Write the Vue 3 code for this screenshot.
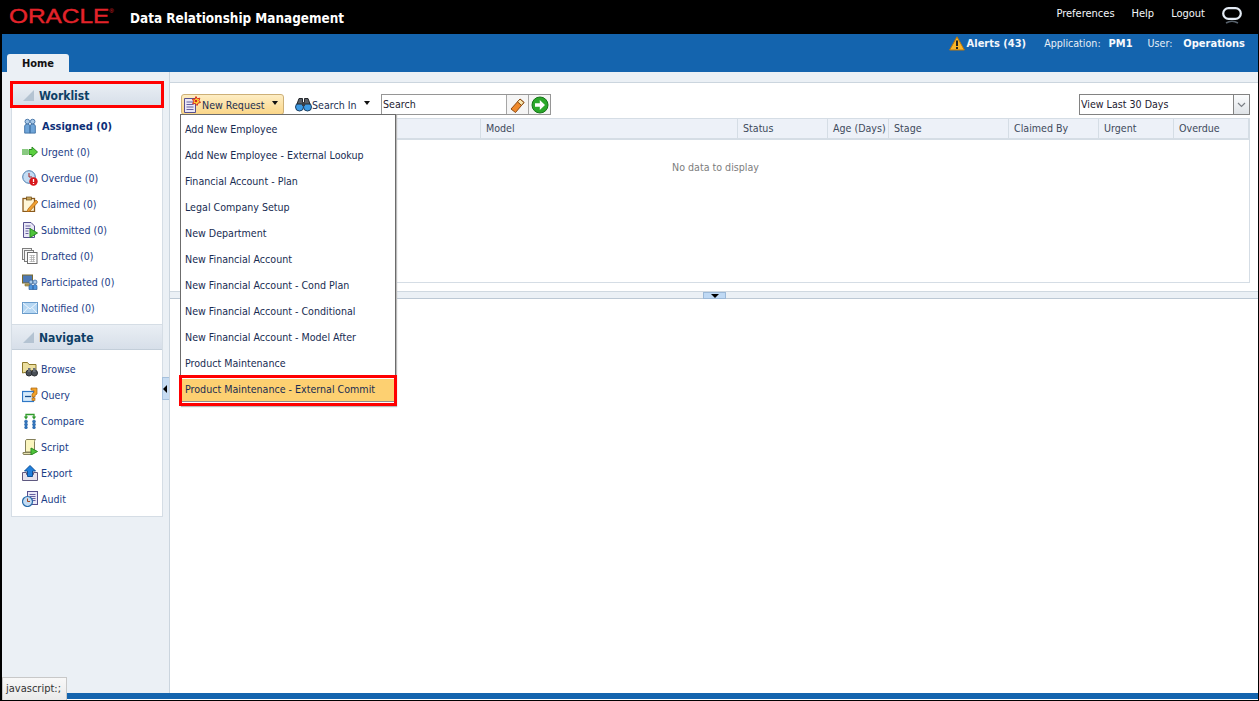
<script setup>
const menuItems = [
  'Add New Employee',
  'Add New Employee - External Lookup',
  'Financial Account - Plan',
  'Legal Company Setup',
  'New Department',
  'New Financial Account',
  'New Financial Account - Cond Plan',
  'New Financial Account - Conditional',
  'New Financial Account - Model After',
  'Product Maintenance'
]
const columns = [
  { label: '', w: 299 },
  { label: 'Model', w: 257 },
  { label: 'Status', w: 90 },
  { label: 'Age (Days)', w: 61 },
  { label: 'Stage', w: 120 },
  { label: 'Claimed By', w: 90 },
  { label: 'Urgent', w: 75 },
  { label: 'Overdue', w: 75 }
]
</script>

<template>
  <div class="app">
    <header class="top">
      <span class="logo">ORACLE<sup>®</sup></span>
      <span class="title">Data Relationship Management</span>
      <nav class="toplinks">
        <span>Preferences</span>
        <span>Help</span>
        <span>Logout</span>
        <svg class="ring" width="20" height="20" viewBox="0 0 20 20">
          <rect x="1.200" y="1.200" width="17.600" height="10.600" rx="5.300" fill="none" stroke="#e4ecf5" stroke-width="2.200" />
          <path d="M4 16 Q10 12.500 16 16" fill="none" stroke="#59636d" stroke-width="1.500" />
        </svg>
      </nav>
    </header>

    <div class="band">
      <div class="status">
        <svg width="16" height="15" viewBox="0 0 16 15">
          <path d="M8 .8 15.400 14H.6Z" fill="#f8b62a" stroke="#b9760f" />
          <rect x="7" y="4.500" width="2" height="5.500" fill="#222" />
          <rect x="7" y="11" width="2" height="2" fill="#222" />
        </svg>
        <b class="alerts">Alerts (43)</b>
        <span class="lab app-lab">Application:</span><b class="val">PM1</b>
        <span class="lab user-lab">User:</span><b class="val">Operations</b>
      </div>
      <div class="tab">Home</div>
    </div>

    <div class="body">
      <aside class="side">
        <div class="panel">
          <h3 class="acc acc-marked"><i class="tri"></i>Worklist</h3>
          <ul class="list">
            <li class="current">
              <svg viewBox="0 0 16 18"><circle cx="5" cy="4" r="2.600" fill="#a9c9e8" stroke="#3d6fa3" /><circle cx="11" cy="4" r="2.600" fill="#a9c9e8" stroke="#3d6fa3" /><path d="M2 17V9q0-2 3-2t3 2v8ZM8 17V9q0-2 3-2t3 2v8Z" fill="#6fa5d8" stroke="#3d6fa3" /></svg>
              <a>Assigned (0)</a>
            </li>
            <li>
              <svg viewBox="0 0 16 16"><path d="M1 5v6M3 5v6M5 5v6" stroke="#3aa52c" stroke-width="1.200" /><path d="M7 5.500h3V3l5.500 5-5.500 5v-2.500H7Z" fill="#5bd03f" stroke="#2c8b22" /></svg>
              <a>Urgent (0)</a>
            </li>
            <li>
              <svg viewBox="0 0 16 16"><circle cx="7" cy="7" r="6.300" fill="#c3dcf3" stroke="#4a7cae" /><path d="M7 3v4h3" fill="none" stroke="#a52020" /><circle cx="11.500" cy="11.500" r="4.200" fill="#d8181c" /><path d="M11.500 9v3M11.500 13v1" stroke="#fff" stroke-width="1.300" /></svg>
              <a>Overdue (0)</a>
            </li>
            <li>
              <svg viewBox="0 0 16 16"><rect x="1" y="2.500" width="11.500" height="13" fill="#fff6d8" stroke="#8a5a1c" stroke-width="1.300" /><rect x="4.500" y="1" width="5" height="3" fill="#c9a65b" stroke="#6b4a18" stroke-width=".7" /><path d="M6 13 14 4l2 2-8 9-3 1Z" fill="#f0a030" stroke="#a8620f" stroke-width=".7" /></svg>
              <a>Claimed (0)</a>
            </li>
            <li>
              <svg viewBox="0 0 16 16"><path d="M1.500.5H9L12.500 4v11.500h-11Z" fill="#e9e7f6" stroke="#56508f" /><path d="M3.500 4h5M3.500 6.500h5M3.500 9h3M3.500 11.500h3" stroke="#6660a0" /><path d="M8 6.500 15.500 11 8 15.500Z" fill="#4ec43a" stroke="#2c8b22" /></svg>
              <a>Submitted (0)</a>
            </li>
            <li>
              <svg viewBox="0 0 16 16"><rect x=".5" y=".5" width="9" height="11" fill="#f2f2f2" stroke="#7d7d7d" /><rect x="2.500" y="2.500" width="9" height="11" fill="#f6f6f6" stroke="#7d7d7d" /><rect x="5.500" y="4.500" width="9.500" height="11" fill="#fff" stroke="#6e6e6e" /><path d="M7.500 7.500h5.500M7.500 9.500h5.500M7.500 11.500h5.500M7.500 13.500h5.500M9.500 7v7M11.500 7v7" stroke="#aaa" stroke-width=".7" /></svg>
              <a>Drafted (0)</a>
            </li>
            <li>
              <svg viewBox="0 0 16 16"><rect x=".5" y="1" width="10" height="8" fill="#4d79b5" stroke="#7b6a2d" /><path d="M3 10h5v2H3Z" fill="#b9a55e" stroke="#7b6a2d" stroke-width=".6" /><circle cx="9" cy="8" r="2" fill="#a9c9e8" stroke="#2f5f9a" stroke-width=".7" /><circle cx="13" cy="8" r="2" fill="#a9c9e8" stroke="#2f5f9a" stroke-width=".7" /><path d="M7 15.500v-3q0-2 2-2t2 2v3ZM11 15.500v-3q0-2 2-2t2 2v3Z" fill="#4f95de" stroke="#2f5f9a" stroke-width=".7" /></svg>
              <a>Participated (0)</a>
            </li>
            <li>
              <svg viewBox="0 0 16 16"><rect x=".5" y="2.500" width="15" height="11" fill="#b6d7f3" stroke="#6a9ccb" /><path d="M1 3 8 9l7-6M1 13l5-5.500M15 13l-5-5.500" fill="none" stroke="#eef6fd" /></svg>
              <a>Notified (0)</a>
            </li>
          </ul>

          <h3 class="acc"><i class="tri"></i>Navigate</h3>
          <ul class="list">
            <li>
              <svg viewBox="0 0 16 16"><path d="M.5 12V1.500h5l1.500 2h7V9Z" fill="#ecdf9f" stroke="#8e7a2b" /><circle cx="7" cy="12" r="3" fill="#4a5058" stroke="#2b2e33" /><circle cx="12.500" cy="12" r="3" fill="#4a5058" stroke="#2b2e33" /><rect x="6" y="7" width="2.500" height="4" fill="#6a7078" /><rect x="11" y="7" width="2.500" height="4" fill="#6a7078" /></svg>
              <a>Browse</a>
            </li>
            <li>
              <svg viewBox="0 0 16 16"><rect x=".5" y="4.500" width="11" height="10" fill="#d7ebfb" stroke="#2f78c6" stroke-width="1.200" /><path d="M3 9.500h6" stroke="#174f8f" stroke-width="1.300" /><path d="M9 3V1h6v6l-2 1.500V10h-3V7l2-1.500V3.500Z" fill="#f3a32a" stroke="#a8620f" stroke-width=".7" /><rect x="10" y="11" width="3" height="2.500" fill="#f3a32a" stroke="#a8620f" stroke-width=".6" /></svg>
              <a>Query</a>
            </li>
            <li>
              <svg viewBox="0 0 16 16"><path d="M4 4V1.500h8V4" fill="none" stroke="#2f9a2a" stroke-width="1.300" /><path d="M1.800 3.500h4.400L4 6.500ZM9.800 3.500h4.400L12 6.500Z" fill="#2f9a2a" /><g fill="#2f74c0" stroke="#1f5c9c" stroke-width=".5"><circle cx="4" cy="8.500" r="1.500" /><circle cx="12" cy="8.500" r="1.500" /><circle cx="4" cy="11.500" r="1.500" /><circle cx="12" cy="11.500" r="1.500" /><circle cx="4" cy="14.500" r="1.400" /><circle cx="12" cy="14.500" r="1.400" /></g></svg>
              <a>Compare</a>
            </li>
            <li>
              <svg viewBox="0 0 16 16"><path d="M3.500 1.500Q4 .5 5 .5h8.500q-1 .8-1 2V13h-9Z" fill="#fbf6bf" stroke="#84805a" /><path d="M1 13.500h9v2H2q-1.500 0-1-2Z" fill="#e6e2ae" stroke="#84805a" /><path d="M9 9l6.500 3.500L9 16Z" fill="#4ec43a" stroke="#2c8b22" /></svg>
              <a>Script</a>
            </li>
            <li>
              <svg viewBox="0 0 16 16"><path d="M.5 7.500h4v2h7v-2h4v8H.5Z" fill="#e4e2ec" stroke="#5e587f" /><path d="M8 .5 13.500 6H10.500v5.500h-5V6H2.500Z" fill="#1f7fdc" stroke="#0d4f95" /></svg>
              <a>Export</a>
            </li>
            <li>
              <svg viewBox="0 0 16 16"><rect x="5.500" y=".5" width="10" height="13" fill="#e9e7f6" stroke="#56508f" /><path d="M7.500 3.500h6M7.500 5.500h6M10 7.500h3.500M10 9.500h3.500" stroke="#6660a0" /><circle cx="5.500" cy="10.500" r="5" fill="#c3dcf3" stroke="#276aa8" stroke-width="1.200" /><path d="M5.500 7.500v3h2.500" fill="none" stroke="#a3471f" /></svg>
              <a>Audit</a>
            </li>
          </ul>
        </div>
        <button class="collapse" aria-label="Collapse"></button>
      </aside>

      <main class="main">
        <section class="upper">
          <div class="toolbar">
            <div class="reqwrap">
              <button class="req">
                <svg width="17" height="17" viewBox="0 0 17 17"><path d="M.5 2.500h11v14H.5Z" fill="#e9e7f6" stroke="#56508f" /><path d="M2.500 6h7M2.500 8.500h7M2.500 11h7M2.500 13.500h7" stroke="#6660a0" /><path d="M12 .5l1.200 2.300 2.600-.6-.8 2.500 1.600 1.700-2.500.7L13 9.500l-1.700-2-2.600.3 1-2.500-1.300-2 2.600-.2Z" fill="#ffd83a" stroke="#d8281c" /><circle cx="12" cy="5" r="1.300" fill="#d8281c" /></svg>
                <span>New Request</span><i class="caret"></i>
              </button>
              <div class="menu">
                <div v-for="m in menuItems" :key="m" class="mi">{{ m }}</div>
                <div class="mi-hit"><span>Product Maintenance - External Commit</span></div>
              </div>
            </div>
            <button class="srch">
              <svg width="17" height="15" viewBox="0 0 17 15"><circle cx="4.500" cy="10" r="4" fill="#3e9be4" stroke="#1d3e60" /><circle cx="12.500" cy="10" r="4" fill="#3e9be4" stroke="#1d3e60" /><path d="M2 7 4 1.500h3.500V7ZM15 7 13 1.500H9.500V7Z" fill="#5a6068" stroke="#25282c" /><rect x="7" y="5" width="3" height="4" fill="#3a3f46" /></svg>
              <span>Search In</span><i class="caret"></i>
            </button>
            <div class="searchbox">
              <span class="sinput">Search</span>
              <span class="sbtn">
                <svg width="18" height="18" viewBox="0 0 18 18"><path d="M2 13 11 3l4 3.500-8.500 10Z" fill="#f08a2c" stroke="#8a4a12" /><path d="M8.500 5.800 11 3l4 3.500-2.500 2.900Z" fill="#f7e6b0" stroke="#8a4a12" /></svg>
              </span>
              <span class="sbtn">
                <svg width="18" height="18" viewBox="0 0 18 18"><circle cx="9" cy="9" r="8" fill="#2aa82a" stroke="#17731a" /><path d="M4 7.300h4.800V4L14 9l-5.200 5v-3.300H4Z" fill="#fff" /></svg>
              </span>
            </div>
            <div class="viewsel">
              <span class="viewtxt">View Last 30 Days</span>
              <span class="viewbtn">
                <svg width="9" height="6" viewBox="0 0 9 6"><path d="M1 1l3.500 3.500L8 1" fill="none" stroke="#7b7f85" stroke-width="1.200" /></svg>
              </span>
            </div>
          </div>
          <div class="grid">
            <div class="ghead">
              <div v-for="c in columns" :key="c.label" class="gcol" :style="{ width: c.w + 'px' }">{{ c.label }}</div>
            </div>
            <div class="empty">No data to display</div>
          </div>
        </section>
        <div class="split"><button class="splitbtn" aria-label="Expand"></button></div>
        <section class="lower"></section>
      </main>
    </div>

    <footer class="foot"></footer>
    <div class="tip">javascript:;</div>
  </div>
</template>

<style>
html, body { margin: 0; padding: 0; background: #fff; }
</style>

<style scoped>
* { box-sizing: border-box; }
.app {
  position: relative;
  width: 1259px;
  height: 701px;
  display: flex;
  flex-direction: column;
  overflow: hidden;
  background: #fff;
  border-left: 2px solid #000;
  border-right: 1px solid #000;
  border-bottom: 1px solid #000;
  font-family: "DejaVu Sans Condensed", "Noto Sans", sans-serif;
  font-size: 10.6px;
  color: #24334d;
}
.top {
  height: 34px;
  background: #000;
  display: flex;
  align-items: flex-start;
  color: #fff;
  flex: none;
}
.logo {
  margin: 3px 0 0 7px;
  width: 121px;
  font: 400 20px/26px "Liberation Sans", sans-serif;
  color: #e3232a;
  -webkit-text-stroke: .4px #e3232a;
  display: inline-block;
  transform: scaleX(1.22);
  transform-origin: left center;
  white-space: nowrap;
}
.logo sup { font-size: 5px; line-height: 0; vertical-align: 10px; -webkit-text-stroke: 0; }
.title {
  margin-top: 9px;
  font: 700 13.4px/20px "DejaVu Sans Condensed", sans-serif;
  white-space: nowrap;
}
.toplinks {
  margin-left: auto;
  display: flex;
  gap: 17px;
  padding: 6px 16px 0 0;
  font-size: 11px;
  line-height: 16px;
  color: #f4f7fa;
}
.ring { margin: 1px 0 0 0; }
.band {
  height: 38px;
  background: #1464ae;
  position: relative;
  flex: none;
  color: #e8f0f8;
}
.status {
  display: flex;
  justify-content: flex-end;
  align-items: center;
  height: 18px;
  padding-right: 13px;
  white-space: nowrap;
}
.status svg { margin-right: 2px; }
.alerts { margin-right: 18px; font-size: 11px; color: #f2f6fb; }
.lab { margin-right: 11px; }
.app-lab { margin-right: 8px; }
.user-lab { margin-left: 15px; }
.val { color: #f7fafd; font-size: 11px; }
.tab {
  position: absolute;
  left: 5px;
  bottom: 0;
  width: 62px;
  height: 18px;
  background: #ebf0f5;
  border-radius: 3px 3px 0 0;
  color: #111;
  font-size: 11px;
  font-weight: 700;
  text-align: center;
  line-height: 19px;
}
.body {
  flex: 1;
  min-height: 0;
  display: flex;
  background: #ebf0f5;
}
.side {
  width: 168px;
  flex: none;
  position: relative;
  padding: 10px 0 0 9px;
  border-right: 1px solid #cbd5de;
}
.panel {
  width: 152px;
  background: #fff;
  border: 1px solid #d5dde5;
  height: 435px;
}
.acc {
  margin: 0;
  height: 26px;
  display: flex;
  align-items: center;
  padding: 1px 0 0 11px;
  font: 700 12px/1 "DejaVu Sans Condensed", sans-serif;
  color: #0e3f66;
  background: linear-gradient(#e9eef4, #d7dfe9);
  border-top: 1px solid #d5dde5;
  border-bottom: 1px solid #c3ced9;
}
.acc-marked {
  height: 27px;
  margin: -2px -2px -1px -2px;
  padding: 2px 0 0 10px;
  border: 3px solid #f00;
}
.tri {
  width: 0;
  height: 0;
  margin-right: 5px;
  border-left: 11px solid transparent;
  border-bottom: 11px solid #b4c3d2;
  display: inline-block;
}
.list {
  list-style: none;
  margin: 0;
  padding: 6px 0 3px 10px;
}
.list li {
  height: 26px;
  display: flex;
  align-items: center;
  gap: 3px;
}
.list svg { width: 16px; height: 16px; flex: none; }
.list a { white-space: nowrap; color: #1b3d87; }
.current a { font-size: 11px; font-weight: 700; color: #0c2f78; margin-left: 1px; }
.collapse {
  position: absolute;
  right: 0;
  top: 305px;
  width: 7px;
  height: 23px;
  padding: 0;
  background: #c7dcf2;
  border: 1px solid #a5c0dc;
  border-right: none;
}
.collapse::after {
  content: "";
  position: absolute;
  left: 0;
  top: 7px;
  border: 4px solid transparent;
  border-left: none;
  border-right-color: #000;
}
.main {
  flex: 1;
  min-width: 0;
  display: flex;
  flex-direction: column;
  padding-top: 10px;
}
.upper {
  height: 209px;
  background: #fff;
  border-top: 1px solid #cbd5de;
  padding: 11px 8px 0 11px;
  flex: none;
}
.toolbar {
  display: flex;
  align-items: flex-start;
  height: 24px;
}
.reqwrap { position: relative; z-index: 5; }
.req, .srch {
  font: inherit;
  color: #1d2f52;
  display: flex;
  align-items: center;
  white-space: nowrap;
  padding: 0;
}
.req {
  width: 103px;
  height: 21px;
  padding-left: 2px;
  background: linear-gradient(#fdedc4, #fbd688);
  border: 1px solid #cdb077;
  border-radius: 3px;
}
.req span { margin: 1px 0 0 1px; }
.caret {
  width: 0;
  height: 0;
  border: 3px solid transparent;
  border-bottom: none;
  border-top: 4px solid #111;
  margin: -3px 0 0 7px;
}
.srch {
  width: 86px;
  height: 21px;
  margin-left: 11px;
  background: none;
  border: none;
}
.srch span { margin: 1px 0 0 0; }
.searchbox {
  display: flex;
  width: 170px;
  height: 21px;
  border: 1px solid #969696;
  background: #fff;
}
.sinput { flex: 1; color: #1d2030; padding-left: 1px; line-height: 19px; }
.sbtn {
  width: 22px;
  flex: none;
  display: flex;
  align-items: center;
  justify-content: center;
  border-left: 1px solid #a6a6a6;
  background: #f5f5f5;
}
.viewsel {
  margin-left: auto;
  width: 171px;
  height: 21px;
  border: 1px solid #828282;
  display: flex;
}
.viewtxt { flex: 1; padding-left: 1px; line-height: 19px; color: #1d2030; }
.viewbtn {
  width: 16px;
  background: linear-gradient(#fbfcfd, #dfe3e7);
  border-left: 1px solid #828282;
  display: flex;
  align-items: center;
  justify-content: center;
}
.menu {
  position: absolute;
  left: -1px;
  top: 20px;
  width: 216px;
  background: #fff;
  border: 1px solid #6c6c6c;
  padding: 1px 0 3px;
  box-shadow: 1px 1px 1px #bbb;
  z-index: 10;
}
.mi {
  height: 26px;
  line-height: 26px;
  padding-left: 4px;
  color: #182c52;
  white-space: nowrap;
}
.mi-hit {
  margin: -1px -2px -4px -2px;
  height: 31px;
  border: 3px solid #f00;
  padding: 1px 0;
  background: #fff;
  position: relative;
}
.mi-hit span {
  display: block;
  height: 23px;
  padding-left: 3px;
  line-height: 21px;
  background: #fdd071;
  border-bottom: 1px solid #8f8f8f;
  color: #182c52;
  white-space: nowrap;
}
.grid {
  height: 165px;
  border: 1px solid #d5dde5;
}
.ghead {
  height: 21px;
  display: flex;
  background: #edf1f8;
  border-bottom: 2px solid #d5dde5;
}
.gcol {
  flex: none;
  border-right: 1px solid #d5dde5;
  padding-left: 5px;
  line-height: 18px;
  color: #404a5c;
  white-space: nowrap;
}
.empty {
  text-align: center;
  color: #7d7d7d;
  margin-top: 18px;
  line-height: 18px;
}
.split {
  height: 8px;
  flex: none;
  background: #ebf0f5;
  border-top: 1px solid #cfd8e0;
  border-bottom: 1px solid #bcc8d4;
  display: flex;
  justify-content: center;
}
.splitbtn {
  width: 23px;
  height: 7px;
  padding: 0;
  position: relative;
  background: #bfd9f4;
  border: 1px solid #9cb9d8;
}
.splitbtn::after {
  content: "";
  position: absolute;
  left: 7px;
  top: 1px;
  border: 4px solid transparent;
  border-bottom: none;
  border-top-color: #000;
}
.lower { flex: 1; background: #fff; }
.foot {
  height: 6px;
  flex: none;
  background: #1464ae;
  margin-bottom: 1px;
}
.tip {
  position: absolute;
  left: 0;
  bottom: -1px;
  width: 65px;
  height: 24px;
  background: linear-gradient(#f8f8f8, #e9e9e9);
  border: 1px solid #c8c8c8;
  border-bottom: none;
  padding-left: 3px;
  font-size: 11px;
  line-height: 22px;
  color: #333;
  white-space: nowrap;
}
</style>
